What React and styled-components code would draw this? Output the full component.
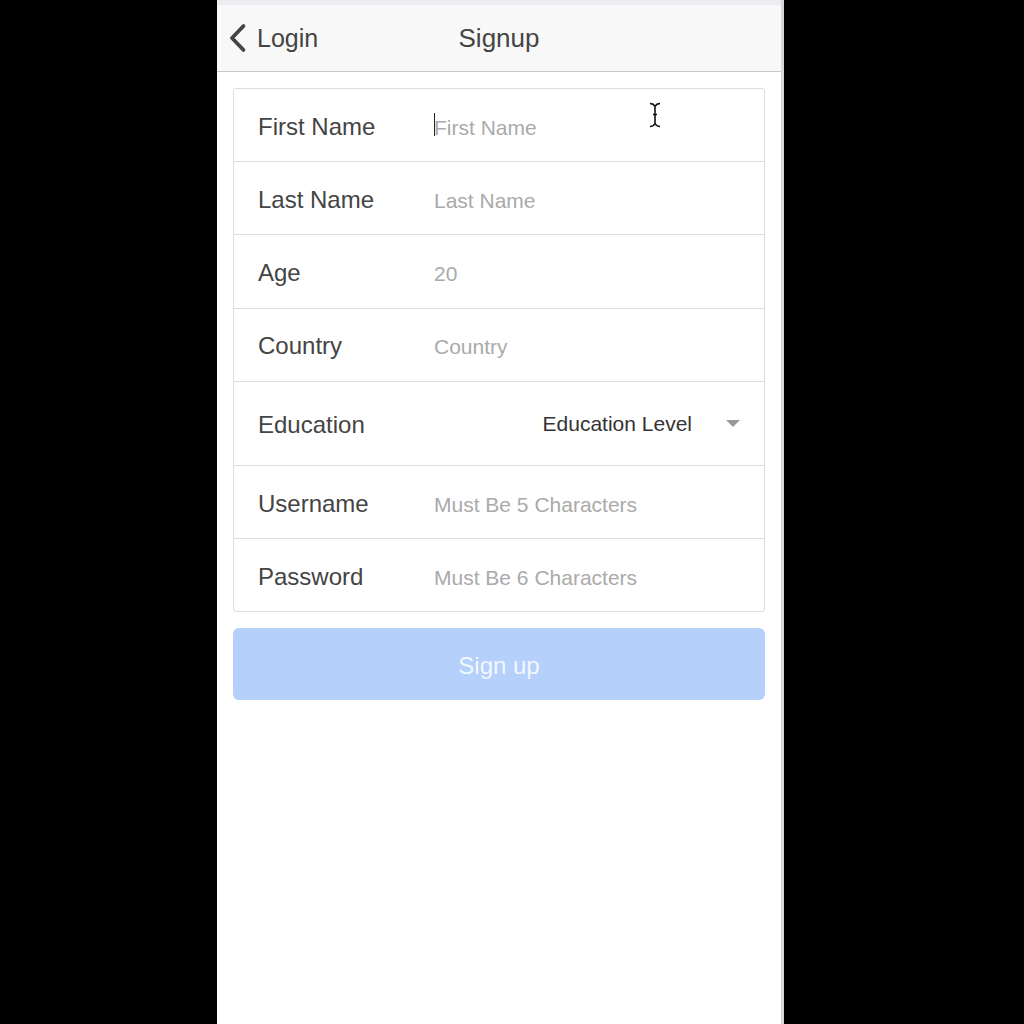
import styled, { createGlobalStyle } from "styled-components";

const GlobalStyle = createGlobalStyle`
  html, body {
    margin: 0;
    padding: 0;
    background: #000;
    font-family: "Liberation Sans", Arial, sans-serif;
  }
`;

const fields = [
  { label: "First Name", placeholder: "First Name", caret: true },
  { label: "Last Name", placeholder: "Last Name" },
  { label: "Age", placeholder: "20" },
  { label: "Country", placeholder: "Country" },
  { label: "Education", select: "Education Level" },
  { label: "Username", placeholder: "Must Be 5 Characters" },
  { label: "Password", placeholder: "Must Be 6 Characters" },
];

function Chevron() {
  return (
    <svg width="20" height="30" viewBox="0 0 20 30">
      <path
        d="M15.5 3 L4 15 L15.5 27"
        fill="none"
        stroke="#444"
        strokeWidth="3.8"
        strokeLinecap="round"
        strokeLinejoin="round"
      />
    </svg>
  );
}

function IBeam() {
  return (
    <svg width="12" height="26" viewBox="0 0 12 26">
      <path
        d="M1 1.5 C3 1.5 5 2.5 6 4.5 C7 2.5 9 1.5 11 1.5 M6 4.5 V21.5 M4 12.5 H8 M1 24.5 C3 24.5 5 23.5 6 21.5 C7 23.5 9 24.5 11 24.5"
        fill="none"
        stroke="#111"
        strokeWidth="1.6"
      />
    </svg>
  );
}

function Field({ label, placeholder, caret, select }) {
  return (
    <Row $tall={!!select}>
      <Label>{label}</Label>
      {select ? (
        <SelectBox>
          <SelectText>{select}</SelectText>
          <Arrow />
        </SelectBox>
      ) : (
        <InputWrap>
          {caret && <Caret />}
          <Input placeholder={placeholder} />
          {caret && (
            <Pointer>
              <IBeam />
            </Pointer>
          )}
        </InputWrap>
      )}
    </Row>
  );
}

export default function App() {
  return (
    <>
      <GlobalStyle />
      <Page>
        <Phone>
          <StatusStrip />
          <Header>
            <BackButton>
              <Chevron />
              <span>Login</span>
            </BackButton>
            <Title>Signup</Title>
          </Header>
          <Content>
            <Card>
              {fields.map((f) => (
                <Field key={f.label} {...f} />
              ))}
            </Card>
            <SubmitButton disabled>Sign up</SubmitButton>
          </Content>
        </Phone>
      </Page>
    </>
  );
}

const Page = styled("div")`
  display: flex;
  padding-left: 217px;
  min-height: 1024px;
  background: #000;
`;

const Phone = styled("div")`
  width: 564px;
  min-height: 1024px;
  background: #fff;
  border-right: 3px solid #d6d6da;
  display: flex;
  flex-direction: column;
`;

const StatusStrip = styled("div")`
  height: 5px;
  background: #ececf1;
`;

const Header = styled("div")`
  position: relative;
  height: 66px;
  background: #f8f8f8;
  border-bottom: 1px solid #c8c8cc;
  display: flex;
  align-items: center;
  justify-content: center;
`;

const BackButton = styled("div")`
  position: absolute;
  left: 11px;
  top: 0;
  bottom: 0;
  display: flex;
  align-items: center;
  gap: 9px;
  font-size: 25px;
  color: #444;
  span {
    margin-top: 1px;
  }
`;

const Title = styled("div")`
  font-size: 26px;
  color: #444;
  margin-top: 1px;
`;

const Content = styled("div")`
  padding: 16px 16px;
  display: flex;
  flex-direction: column;
  gap: 16px;
`;

const Card = styled("div")`
  border: 1px solid #ddd;
  border-radius: 3px;
  background: #fff;
`;

const Row = styled("div")`
  height: ${(p) => (p.$tall ? "83.2px" : "72.2px")};
  display: flex;
  align-items: center;
  padding: 0 24px;
  & + & {
    border-top: 1px solid #ddd;
  }
`;

const Label = styled("div")`
  width: 176px;
  flex: none;
  font-size: 24px;
  color: #444;
  padding-top: 3px;
`;

const InputWrap = styled("div")`
  position: relative;
  flex: 1;
  display: flex;
  align-items: center;
`;

const Input = styled("input")`
  flex: 1;
  border: none;
  outline: none;
  padding: 0;
  margin: 0;
  background: transparent;
  font-family: "Liberation Sans", Arial, sans-serif;
  font-size: 21px;
  color: #444;
  height: 30px;
  padding-top: 5px;
  &::placeholder {
    color: #aaa;
  }
`;

const Caret = styled("span")`
  position: absolute;
  left: 0;
  top: 5px;
  width: 1px;
  height: 23px;
  background: #222;
`;

const Pointer = styled("span")`
  position: absolute;
  left: 215px;
  top: -6px;
  pointer-events: none;
`;

const SelectBox = styled("div")`
  flex: 1;
  display: flex;
  align-items: center;
  justify-content: flex-end;
  padding-top: 1px;
`;

const SelectText = styled("span")`
  font-size: 21px;
  color: #333;
`;

const Arrow = styled("span")`
  width: 0;
  height: 0;
  margin-left: 34px;
  border-left: 7px solid transparent;
  border-right: 7px solid transparent;
  border-top: 7px solid #999;
`;

const SubmitButton = styled("button")`
  height: 72px;
  border: none;
  border-radius: 6px;
  background: #b5d0fb;
  color: rgba(255, 255, 255, 0.85);
  font-family: "Liberation Sans", Arial, sans-serif;
  font-size: 24px;
  padding-top: 4px;
  cursor: default;
`;
